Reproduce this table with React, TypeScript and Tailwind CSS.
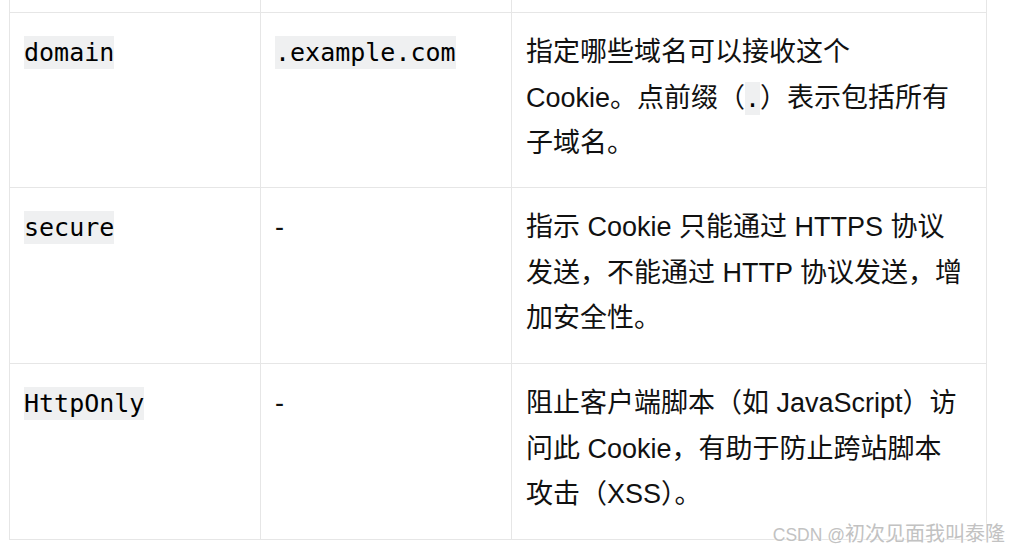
const sans = "font-['Liberation_Sans','Noto_Sans_CJK_SC',sans-serif]";

function Code({ children }: { children: React.ReactNode }) {
  return (
    <code className="bg-[#eff0f1] py-[2px] text-[25px] font-['DejaVu_Sans_Mono',monospace] text-black">
      {children}
    </code>
  );
}

const rows = [
  {
    name: "domain",
    value: <Code>.example.com</Code>,
    desc: [
      <>指定哪些域名可以接收这个</>,
      <>
        Cookie。点前缀（<Code>.</Code>）表示包括所有
      </>,
      <>子域名。</>,
    ],
  },
  {
    name: "secure",
    value: "-",
    desc: [
      <>指示 Cookie 只能通过 HTTPS 协议</>,
      <>发送，不能通过 HTTP 协议发送，增</>,
      <>加安全性。</>,
    ],
  },
  {
    name: "HttpOnly",
    value: "-",
    desc: [
      <>阻止客户端脚本（如 JavaScript）访</>,
      <>问此 Cookie，有助于防止跨站脚本</>,
      <>攻击（XSS）。</>,
    ],
  },
];

export default function App() {
  return (
    <div className={`relative h-[554px] w-[1009px] overflow-hidden bg-white text-[#111] ${sans}`}>
      <div className="ml-[9px] w-[978px] border-x border-[#e6e6e6]">
        {/* tail of the previous row */}
        <div className="flex h-[13px] border-b border-[#e6e6e6]">
          <div className="w-[251px] border-r border-[#e6e6e6]" />
          <div className="w-[251px] border-r border-[#e6e6e6]" />
          <div className="flex-1" />
        </div>

        {rows.map((row, i) => (
          <div
            key={row.name}
            className={`flex border-b border-[#e6e6e6] ${i === 0 ? "h-[175px]" : "h-[176px]"}`}
          >
            <div className="w-[251px] border-r border-[#e6e6e6] px-[14px] pt-[17px] text-[27px] leading-[45.5px]">
              <Code>{row.name}</Code>
            </div>
            <div className="w-[251px] border-r border-[#e6e6e6] px-[14px] pt-[17px] text-[27px] leading-[45.5px]">
              {row.value}
            </div>
            <div className="flex-1 px-[14px] pt-[17px] text-[27px] leading-[45.5px]">
              {row.desc.map((line, j) => (
                <div key={j} className="whitespace-nowrap">
                  {line}
                </div>
              ))}
            </div>
          </div>
        ))}
      </div>

      {/* watermark */}
      <div className="absolute right-[4px] bottom-[6px] flex items-baseline text-[#c2c2c2] [text-shadow:0_0_2px_#fff,0_0_2px_#fff]">
        <span className="text-[17.5px] font-['Liberation_Sans',sans-serif]">CSDN @</span>
        <span className="text-[20px] font-['Noto_Sans_CJK_SC',sans-serif]">初次见面我叫泰隆</span>
      </div>
    </div>
  );
}
